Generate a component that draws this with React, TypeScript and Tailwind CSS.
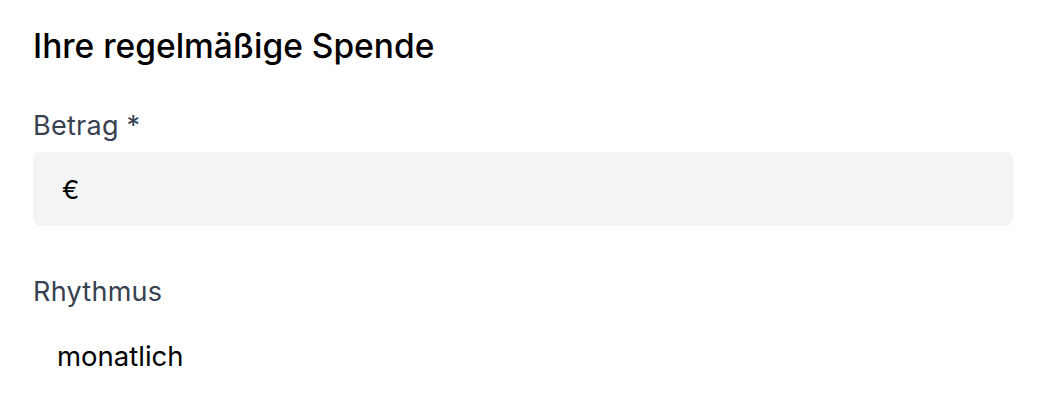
export default function App() {
  return (
    <div className="min-h-screen bg-white px-[33px] pt-[26px] font-['Inter',sans-serif] text-black">
      <h2 className="text-[33.5px] font-medium leading-[40px]">Ihre regelmäßige Spende</h2>
      <div className="mt-[42px]">
        <label className="block text-[27px] leading-[36px] tracking-[0.01em] text-[#374151]">Betrag *</label>
        <div className="mt-[8px] flex h-[74px] w-[980px] items-center rounded-[8px] bg-[#f3f4f6] px-[29px]">
          <span className="text-[26px]">€</span>
        </div>
      </div>
      <div className="mt-[48px]">
        <label className="block text-[27px] leading-[36px] tracking-[0.01em] text-[#374151]">Rhythmus</label>
        <div className="mt-[28px] pl-[24px] text-[27.5px] leading-[36px]">monatlich</div>
      </div>
    </div>
  );
}
